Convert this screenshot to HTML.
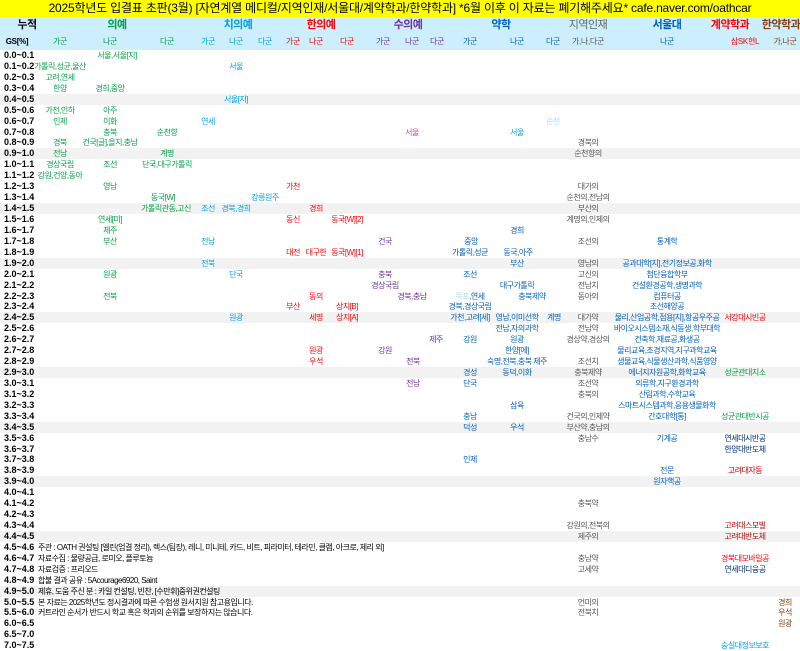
<!DOCTYPE html>
<html><head><meta charset="utf-8"><style>
*{margin:0;padding:0;box-sizing:border-box}
body{width:800px;height:651px;overflow:hidden;background:#fff;position:relative;font-family:"Liberation Sans","Noto Sans CJK KR","NanumGothic",sans-serif;font-size:9px;color:#000}
.t{position:absolute;left:0;top:0;width:800px;height:17px;background:#ffff00;font-size:12px;line-height:17px;text-align:center;white-space:nowrap;letter-spacing:-0.2px}
.h1{position:absolute;left:0;top:17px;width:800px;height:16px;background:#cdeefc}
.h2{position:absolute;left:0;top:33px;width:800px;height:17px;background:#cdeefc}
.h1 span{position:absolute;top:0;line-height:16px;font-size:11px;font-weight:bold;transform:translateX(-50%);white-space:nowrap;letter-spacing:-0.5px}
.h2 span{position:absolute;top:0;line-height:17px;font-size:8px;transform:translateX(-50%);white-space:nowrap;letter-spacing:-0.3px}
.r{position:absolute;left:0;width:800px;height:11px}
.r.g{background:#f2f2f2}
.r b{position:absolute;left:4px;top:0;line-height:11px;font-weight:bold;font-size:9px;color:#000}
.r span{position:absolute;top:0;line-height:11px;transform:translateX(-50%);white-space:nowrap;font-size:8px;letter-spacing:-0.5px}
.r i{position:absolute;left:38px;top:0;line-height:11px;font-style:normal;white-space:nowrap;font-size:8px;letter-spacing:-0.5px;color:#000}
.G{color:#00a044}.S{color:#00a0e8}.R{color:#ff0000}.P{color:#7030a0}.B{color:#0060c0}.Y{color:#555}.N{color:#002f7a}.D{color:#c00000}.W{color:#843c0c}.L{color:#a8daf5}.M{color:#cc44aa}
</style></head><body>
<div class="t">2025학년도 입결표 초판(3월) [자연계열 메디컬/지역인재/서울대/계약학과/한약학과] *6월 이후 이 자료는 폐기해주세요* cafe.naver.com/oathcar</div>
<div class="h1">
<span style="left:27px">누적</span>
<span class="G" style="left:117px">의예</span>
<span class="S" style="left:238px">치의예</span>
<span class="R" style="left:321px">한의예</span>
<span class="P" style="left:408px">수의예</span>
<span class="B" style="left:501px">약학</span>
<span style="left:588px;color:#666;font-weight:normal">지역인재</span>
<span class="B" style="left:667px">서울대</span>
<span class="R" style="left:730px">계약학과</span>
<span class="W" style="left:781px">한약학과</span>
</div>
<div class="h2">
<span style="left:17px;font-weight:bold">GS[%]</span>
<span class="G" style="left:60px">가군</span><span class="G" style="left:110px">나군</span><span class="G" style="left:167px">다군</span>
<span class="S" style="left:208px">가군</span><span class="S" style="left:236px">나군</span><span class="S" style="left:265px">다군</span>
<span class="R" style="left:293px">가군</span><span class="R" style="left:316px">나군</span><span class="R" style="left:347px">다군</span>
<span class="P" style="left:383px">가군</span><span class="P" style="left:412px">나군</span><span class="P" style="left:437px">다군</span>
<span class="B" style="left:470px">가군</span><span class="B" style="left:517px">나군</span><span class="B" style="left:553px">다군</span>
<span class="Y" style="left:588px">가,나,다군</span>
<span class="B" style="left:667px">나군</span>
<span class="R" style="left:745px">삼SK현L</span>
<span class="W" style="left:785px">가,나군</span>
</div>

<div class="r" style="top:50px"><b>0.0~0.1</b><span class="G" style="left:117px">서울,서울[지]</span></div>
<div class="r" style="top:60.9px"><b>0.1~0.2</b><span class="G" style="left:60px">가톨릭,성균,울산</span><span class="S" style="left:236px">서울</span></div>
<div class="r" style="top:71.9px"><b>0.2~0.3</b><span class="G" style="left:60px">고려,연세</span></div>
<div class="r" style="top:82.8px"><b>0.3~0.4</b><span class="G" style="left:60px">한양</span><span class="G" style="left:110px">경희,중앙</span></div>
<div class="r g" style="top:93.7px"><b>0.4~0.5</b><span class="S" style="left:236px">서울[지]</span></div>
<div class="r" style="top:104.7px"><b>0.5~0.6</b><span class="G" style="left:60px">가천,인하</span><span class="G" style="left:110px">아주</span></div>
<div class="r" style="top:115.6px"><b>0.6~0.7</b><span class="G" style="left:60px">인제</span><span class="G" style="left:110px">이화</span><span class="S" style="left:208px">연세</span><span class="L" style="left:553px">순천</span></div>
<div class="r" style="top:126.5px"><b>0.7~0.8</b><span class="G" style="left:110px">충북</span><span class="G" style="left:167px">순천향</span><span class="M" style="left:412px">서울</span><span class="S" style="left:517px">서울</span></div>
<div class="r" style="top:137.4px"><b>0.8~0.9</b><span class="G" style="left:60px">경북</span><span class="G" style="left:110px">건국[글],을지,충남</span><span class="Y" style="left:588px">경북의</span></div>
<div class="r g" style="top:148.4px"><b>0.9~1.0</b><span class="G" style="left:60px">전남</span><span class="G" style="left:167px">계명</span><span class="Y" style="left:588px">순천향의</span></div>
<div class="r" style="top:159.3px"><b>1.0~1.1</b><span class="G" style="left:60px">경상국립</span><span class="G" style="left:110px">조선</span><span class="G" style="left:167px">단국,대구가톨릭</span></div>
<div class="r" style="top:170.2px"><b>1.1~1.2</b><span class="G" style="left:60px">강원,건양,동아</span></div>
<div class="r" style="top:181.2px"><b>1.2~1.3</b><span class="G" style="left:110px">영남</span><span class="R" style="left:293px">가천</span><span class="Y" style="left:588px">대가의</span></div>
<div class="r" style="top:192.1px"><b>1.3~1.4</b><span class="G" style="left:163px">동국[W]</span><span class="S" style="left:265px">강릉원주</span><span class="Y" style="left:588px">순천의,전남의</span></div>
<div class="r g" style="top:203px"><b>1.4~1.5</b><span class="G" style="left:166px">가톨릭관동,고신</span><span class="S" style="left:208px">조선</span><span class="S" style="left:236px">경북,경희</span><span class="R" style="left:316px">경희</span><span class="Y" style="left:588px">부산의</span></div>
<div class="r" style="top:214px"><b>1.5~1.6</b><span class="G" style="left:110px">연세[미]</span><span class="R" style="left:293px">동신</span><span class="R" style="left:347px">동국[W][2]</span><span class="Y" style="left:588px">계명의,인제의</span></div>
<div class="r" style="top:224.9px"><b>1.6~1.7</b><span class="G" style="left:110px">제주</span><span class="B" style="left:517px">경희</span></div>
<div class="r" style="top:235.8px"><b>1.7~1.8</b><span class="G" style="left:110px">부산</span><span class="S" style="left:208px">전남</span><span class="P" style="left:385px">건국</span><span class="B" style="left:471px">중앙</span><span class="Y" style="left:588px">조선의</span><span class="B" style="left:667px">통계학</span></div>
<div class="r" style="top:246.7px"><b>1.8~1.9</b><span class="R" style="left:293px">대전</span><span class="R" style="left:316px">대구한</span><span class="R" style="left:347px">동국[W][1]</span><span class="B" style="left:470px">가톨릭,성균</span><span class="B" style="left:518px">동국,아주</span></div>
<div class="r g" style="top:257.7px"><b>1.9~2.0</b><span class="S" style="left:208px">전북</span><span class="B" style="left:517px">부산</span><span class="Y" style="left:588px">영남의</span><span class="B" style="left:667px">공과대학[지],전기정보공,화학</span></div>
<div class="r" style="top:268.6px"><b>2.0~2.1</b><span class="G" style="left:110px">원광</span><span class="S" style="left:236px">단국</span><span class="P" style="left:385px">충북</span><span class="B" style="left:470px">조선</span><span class="Y" style="left:588px">고신의</span><span class="B" style="left:667px">첨단융합학부</span></div>
<div class="r" style="top:279.5px"><b>2.1~2.2</b><span class="P" style="left:385px">경상국립</span><span class="B" style="left:517px">대구가톨릭</span><span class="Y" style="left:588px">전남치</span><span class="B" style="left:667px">건설환경공학,생명과학</span></div>
<div class="r" style="top:290.5px"><b>2.2~2.3</b><span class="G" style="left:110px">전북</span><span class="R" style="left:316px">동의</span><span class="P" style="left:412px">경북,충남</span><span class="B" style="left:470px"><span class="L" style="position:static;transform:none">목포</span>,연세</span><span class="B" style="left:532px">충북제약</span><span class="Y" style="left:588px">동아의</span><span class="B" style="left:667px">컴퓨터공</span></div>
<div class="r" style="top:301.4px"><b>2.3~2.4</b><span class="R" style="left:293px">부산</span><span class="R" style="left:347px">상지[B]</span><span class="B" style="left:470px">경북,경상국립</span><span class="B" style="left:667px">조선해양공</span></div>
<div class="r g" style="top:312.3px"><b>2.4~2.5</b><span class="S" style="left:236px">원광</span><span class="R" style="left:316px">세명</span><span class="R" style="left:347px">상지[A]</span><span class="B" style="left:470px">가천,고려[세]</span><span class="B" style="left:517px">영남,이미선학</span><span class="B" style="left:554px">계명</span><span class="Y" style="left:588px">대가약</span><span class="B" style="left:667px">물리,산업공학,점용[지],항공우주공</span><span class="R" style="left:745px">서강대시빈공</span></div>
<div class="r" style="top:323.3px"><b>2.5~2.6</b><span class="B" style="left:517px">전남,자의과학</span><span class="Y" style="left:588px">전남약</span><span class="B" style="left:667px">바이오시스템소재,식동생,학부대학</span></div>
<div class="r" style="top:334.2px"><b>2.6~2.7</b><span class="P" style="left:436px">제주</span><span class="B" style="left:470px">강원</span><span class="B" style="left:517px">원광</span><span class="Y" style="left:588px">경상약,경상의</span><span class="B" style="left:667px">건축학,재료공,화생공</span></div>
<div class="r" style="top:345.1px"><b>2.7~2.8</b><span class="R" style="left:316px">원광</span><span class="P" style="left:385px">강원</span><span class="B" style="left:517px">한양[에]</span><span class="B" style="left:667px">물리교육,조경지역,지구과학교육</span></div>
<div class="r" style="top:356px"><b>2.8~2.9</b><span class="R" style="left:316px">우석</span><span class="P" style="left:413px">전북</span><span class="B" style="left:517px">숙명,전북,충북 제주</span><span class="Y" style="left:588px">조선치</span><span class="B" style="left:667px">생물교육,식물생산과학,식품영양</span></div>
<div class="r g" style="top:367px"><b>2.9~3.0</b><span class="B" style="left:470px">경성</span><span class="B" style="left:517px">동덕,이화</span><span class="Y" style="left:588px">충북제약</span><span class="B" style="left:667px">에너지자원공학,화학교육</span><span class="G" style="left:745px">성균관대지소</span></div>
<div class="r" style="top:377.9px"><b>3.0~3.1</b><span class="P" style="left:413px">전남</span><span class="B" style="left:470px">단국</span><span class="Y" style="left:588px">조선약</span><span class="B" style="left:667px">의류학,지구환경과학</span></div>
<div class="r" style="top:388.8px"><b>3.1~3.2</b><span class="Y" style="left:588px">충북의</span><span class="B" style="left:667px">산림과학,수학교육</span></div>
<div class="r" style="top:399.8px"><b>3.2~3.3</b><span class="B" style="left:517px">삼육</span><span class="B" style="left:667px">스마트시스템과학,응용생물화학</span></div>
<div class="r" style="top:410.7px"><b>3.3~3.4</b><span class="B" style="left:470px">충남</span><span class="Y" style="left:588px">건국의,인제약</span><span class="B" style="left:667px">간호대학[통]</span><span class="G" style="left:745px">성균관대반시공</span></div>
<div class="r g" style="top:421.6px"><b>3.4~3.5</b><span class="B" style="left:470px">덕성</span><span class="B" style="left:517px">우석</span><span class="Y" style="left:588px">부산약,충남의</span></div>
<div class="r" style="top:432.6px"><b>3.5~3.6</b><span class="Y" style="left:588px">충남수</span><span class="B" style="left:667px">기계공</span><span class="N" style="left:745px">연세대시반공</span></div>
<div class="r" style="top:443.5px"><b>3.6~3.7</b><span class="N" style="left:745px">한양대반도체</span></div>
<div class="r" style="top:454.4px"><b>3.7~3.8</b><span class="B" style="left:470px">인제</span></div>
<div class="r" style="top:465.3px"><b>3.8~3.9</b><span class="B" style="left:667px">전문</span><span class="D" style="left:745px">고려대자동</span></div>
<div class="r g" style="top:476.3px"><b>3.9~4.0</b><span class="B" style="left:667px">원자핵공</span></div>
<div class="r" style="top:487.2px"><b>4.0~4.1</b></div>
<div class="r" style="top:498.1px"><b>4.1~4.2</b><span class="Y" style="left:588px">충북약</span></div>
<div class="r" style="top:509.1px"><b>4.2~4.3</b></div>
<div class="r" style="top:520px"><b>4.3~4.4</b><span class="Y" style="left:588px">강원의,전북의</span><span class="D" style="left:745px">고려대스모빌</span></div>
<div class="r g" style="top:530.9px"><b>4.4~4.5</b><span class="Y" style="left:588px">제주의</span><span class="D" style="left:745px">고려대반도체</span></div>
<div class="r" style="top:541.9px"><b>4.5~4.6</b><i>주관 : OATH 권설팅 [엘린(엄결 정리), 렉스(팀장), 레니, 미니테, 카드, 비트, 피라미터, 테라민, 클램, 아크로, 제리 외]</i></div>
<div class="r" style="top:552.8px"><b>4.6~4.7</b><i>자료수집 : 물량공급, 로미오, 플루토늄</i><span class="Y" style="left:588px">충남약</span><span class="R" style="left:745px">경북대모바일공</span></div>
<div class="r" style="top:563.7px"><b>4.7~4.8</b><i>자료검증 : 프리오드</i><span class="Y" style="left:588px">고세약</span><span class="N" style="left:745px">연세대디융공</span></div>
<div class="r" style="top:574.6px"><b>4.8~4.9</b><i>합불 결과 공유 : 5Acourage6920, Saint</i></div>
<div class="r g" style="top:585.6px"><b>4.9~5.0</b><i>제휴, 도움 주신 분 : 카일 컨설팅, 빈찬, [수만휘]중위권컨설팅</i></div>
<div class="r" style="top:596.5px"><b>5.0~5.5</b><i>본 자료는 2025학년도 정시결과에 따른 수험생 원서지원 참고용입니다.</i><span class="Y" style="left:588px">언미의</span><span class="W" style="left:785px">경희</span></div>
<div class="r" style="top:607.4px"><b>5.5~6.0</b><i>커트라인 순서가 반드시 학교 혹은 학과의 순위를 보장하지는 않습니다.</i><span class="Y" style="left:588px">전북치</span><span class="W" style="left:785px">우석</span></div>
<div class="r" style="top:618.4px"><b>6.0~6.5</b><span class="W" style="left:785px">원광</span></div>
<div class="r" style="top:629.3px"><b>6.5~7.0</b></div>
<div class="r" style="top:640.2px"><b>7.0~7.5</b><span class="S" style="left:745px">숭실대정보보호</span></div>
</body></html>
